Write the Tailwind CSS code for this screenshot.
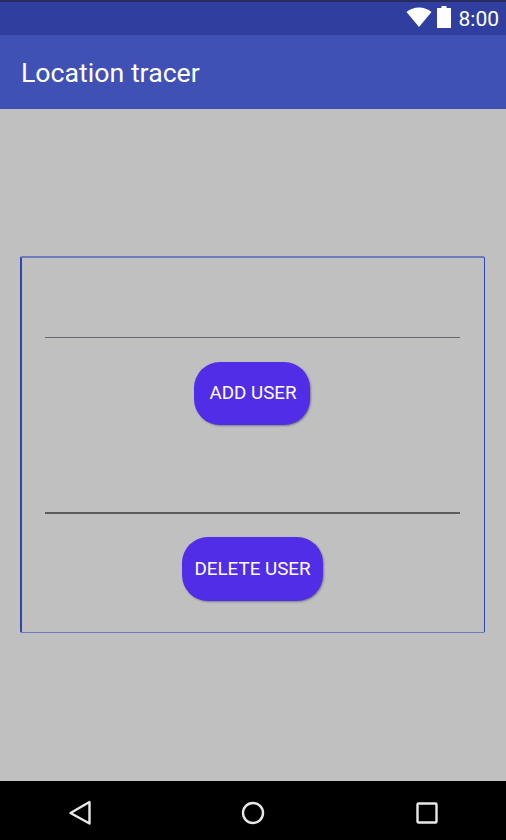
<!DOCTYPE html>
<html lang="en">
  <head>
    <meta charset="UTF-8" />
    <meta name="viewport" content="width=device-width, initial-scale=1.0" />
    <title>Location tracer</title>
    <script src="https://cdn.jsdelivr.net/npm/@tailwindcss/browser@4"></script>
  </head>
  <body class="w-[506px] h-[840px] overflow-hidden flex flex-col bg-[#c0c0c0] font-['Roboto',sans-serif]">
    <!-- Status bar -->
    <div class="h-[35px] shrink-0 bg-[#303f9f] border-t-2 border-[#272c5c] flex items-center justify-end text-white">
      <svg width="26" height="20" viewBox="0 0 26 20" class="mr-[5px] mb-[4px]">
        <path d="M0.5 5 C7.5 -1 18.5 -1 25.5 5 L13 20 Z" fill="#fff" />
      </svg>
      <svg width="14" height="22" viewBox="0 0 14 22" class="mr-[8px] mb-[4px]">
        <path d="M4.5 0 H9.5 V2 H14 V22 H0 V2 H4.5 Z" fill="#fff" />
      </svg>
      <span class="text-[21px] leading-none mr-[7px] mt-[2px]">8:00</span>
    </div>

    <!-- App bar -->
    <div class="h-[74px] shrink-0 bg-[#3f51b5] flex items-center pl-[21px] pt-[2px]">
      <span class="text-[26.7px] font-[450] leading-none text-white">Location tracer</span>
    </div>

    <!-- Content -->
    <div class="flex-1 pt-[147px] pl-[20px]">
      <div class="w-[465px] h-[377px] border border-l-2 border-t-2 border-[#2f45b0] border-t-[#6d7bbd] border-b-[#6d7bbd] rounded-[2px] pl-[23px] pr-[24px] flex flex-col items-center">
        <div class="w-full h-px bg-[#666a70] mt-[79px]"></div>
        <button class="mt-[24px] w-[116px] h-[63px] rounded-[26px] bg-[#512de8] text-white text-[18.8px] font-[450] leading-none pl-[3px] shadow-[1px_1px_2px_rgba(0,0,0,0.35)] -translate-x-px">ADD USER</button>
        <div class="w-full h-[2px] bg-[#5c5c5c] mt-[87px]"></div>
        <button class="mt-[23px] w-[141px] h-[64px] rounded-[26px] bg-[#512de8] text-white text-[18.8px] font-[450] leading-none pt-[1px] shadow-[1px_1px_2px_rgba(0,0,0,0.35)]">DELETE USER</button>
      </div>
    </div>

    <!-- Nav bar -->
    <div class="h-[59px] shrink-0 bg-black relative">
      <svg width="24" height="26" viewBox="0 0 24 26" class="absolute left-[68px] top-[19px]">
        <path d="M21.5 2 V23.5 L2.5 13 Z" fill="none" stroke="#e8e8e8" stroke-width="2.4" stroke-linejoin="round" />
      </svg>
      <svg width="24" height="24" viewBox="0 0 24 24" class="absolute left-[241px] top-[20px]">
        <circle cx="12" cy="12" r="10" fill="none" stroke="#e8e8e8" stroke-width="2.4" />
      </svg>
      <svg width="22" height="22" viewBox="0 0 22 22" class="absolute left-[416px] top-[21px]">
        <rect x="1.5" y="1.5" width="19" height="19" rx="1" fill="none" stroke="#e8e8e8" stroke-width="2.4" />
      </svg>
    </div>
  </body>
</html>
